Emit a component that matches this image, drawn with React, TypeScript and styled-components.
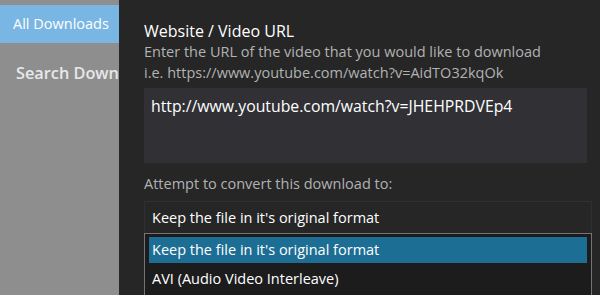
import React from "react";
import styled, {createGlobalStyle} from "styled-components";

const GlobalStyle = createGlobalStyle`
    html, body {
        margin: 0;
        padding: 0;
        width: 600px;
        height: 295px;
        overflow: hidden;
        background: #8e8e8e;
        font-family: "Open Sans", "Noto Sans", Arial, sans-serif;
    }
`;

const Shell = styled.div`
    display: flex;
    width: 600px;
    height: 295px;
    overflow: hidden;
`;

const Sidebar = styled.nav`
    width: 119px;
    flex: 0 0 119px;
    background: #8e8e8e;
    padding-top: 5px;
    overflow: hidden;
`;

const NavItem = styled.div<{$active?: boolean}>`
    height: 38px;
    line-height: 38px;
    padding-left: ${(p) => (p.$active ? 13 : 16)}px;
    margin-bottom: 11px;
    white-space: nowrap;
    font-size: ${(p) => (p.$active ? 14.5 : 16.3)}px;
    font-weight: ${(p) => (p.$active ? 400 : 600)};
    color: ${(p) => (p.$active ? "#ffffff" : "#e8e8e8")};
    background: ${(p) => (p.$active ? "#79b6e3" : "transparent")};
`;

const Panel = styled.main`
    flex: 1;
    background: #262626;
    padding: 21px 8px 0 25px;
    display: flex;
    flex-direction: column;
`;

const Title = styled.div`
    color: #ffffff;
    font-size: 16px;
    line-height: 20px;
`;

const Hint = styled.div`
    color: #b2b2b2;
    font-size: 14.5px;
    line-height: 21px;
`;

const UrlBox = styled.div`
    margin-top: 5px;
    width: 443px;
    height: 75px;
    flex: 0 0 75px;
    background: #313135;
    box-sizing: border-box;
    padding: 7px 7px;
    color: #ffffff;
    font-size: 15.8px;
    line-height: 22px;
`;

const Label = styled(Hint)`
    margin-top: 10px;
`;

const SelectWrap = styled.div`
    margin-top: 7px;
    width: 448px;
    display: flex;
    flex-direction: column;
`;

const SelectBox = styled.div`
    height: 32px;
    box-sizing: border-box;
    border: 1px solid #303030;
    border-bottom: none;
    background: #262627;
    padding-left: 7px;
    color: #ffffff;
    font-size: 14.5px;
    line-height: 31px;
`;

const List = styled.div`
    border: 1px solid #747474;
    border-bottom: none;
    background: #1c1c1d;
    padding: 3px 4px 0 4px;
    height: 70px;
`;

const Option = styled.div<{$selected?: boolean}>`
    height: 26px;
    line-height: 26px;
    padding-left: 3px;
    margin-bottom: 3px;
    color: #ffffff;
    font-size: 14.5px;
    background: ${(p) => (p.$selected ? "#1d6e94" : "transparent")};
`;

export default function App() {
    return (
        <>
            <GlobalStyle />
            <Shell>
                <Sidebar>
                    <NavItem $active>All Downloads</NavItem>
                    <NavItem>Search Downloads</NavItem>
                </Sidebar>
                <Panel>
                    <Title>Website / Video URL</Title>
                    <Hint>Enter the URL of the video that you would like to download</Hint>
                    <Hint>i.e. https://www.youtube.com/watch?v=AidTO32kqOk</Hint>
                    <UrlBox>http://www.youtube.com/watch?v=JHEHPRDVEp4</UrlBox>
                    <Label>Attempt to convert this download to:</Label>
                    <SelectWrap>
                        <SelectBox>Keep the file in it's original format</SelectBox>
                        <List>
                            <Option $selected>Keep the file in it's original format</Option>
                            <Option>AVI (Audio Video Interleave)</Option>
                        </List>
                    </SelectWrap>
                </Panel>
            </Shell>
        </>
    );
}
